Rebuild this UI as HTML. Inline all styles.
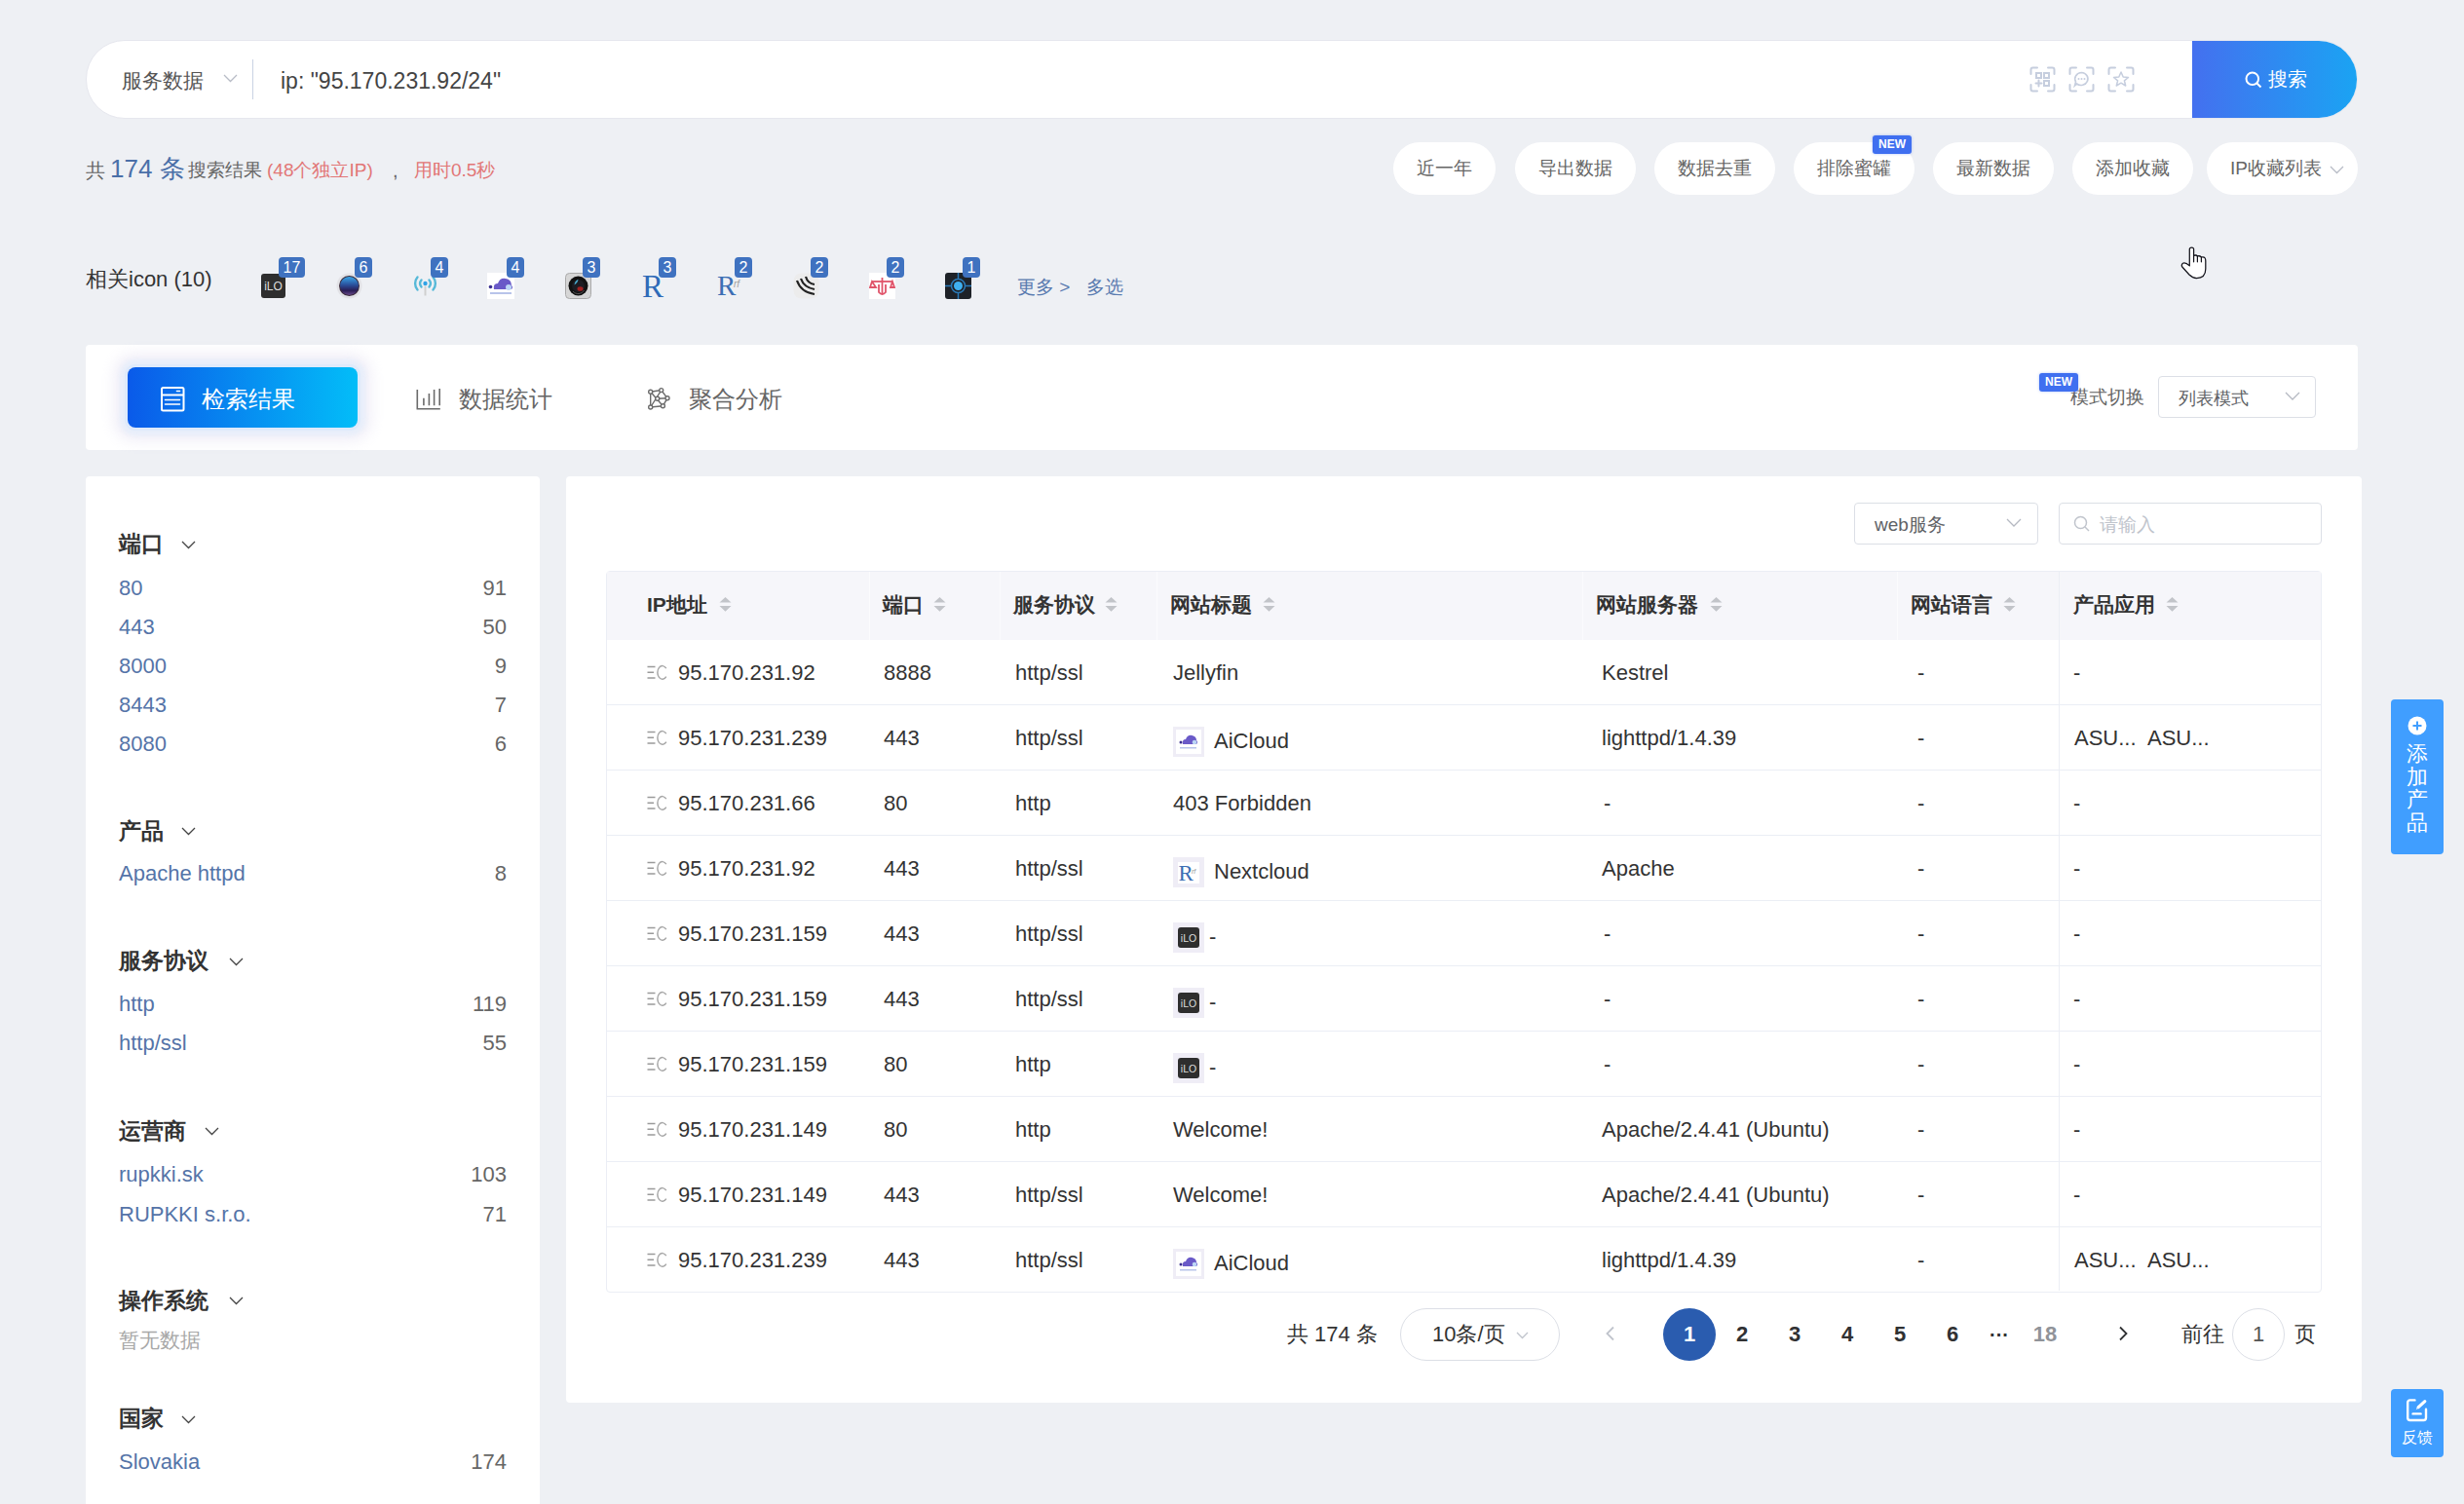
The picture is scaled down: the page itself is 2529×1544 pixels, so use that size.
<!DOCTYPE html>
<html><head><meta charset="utf-8">
<style>
@font-face{font-family:"LS CJK";src:local("Liberation Sans");unicode-range:U+2E80-9FFF,U+F900-FAFF,U+FE30-FE4F,U+FF00-FFEF;size-adjust:133%}
*{box-sizing:border-box;margin:0;padding:0}
.tofu .zh{-webkit-text-stroke:.045em currentColor;position:relative;top:.09em}

html,body{width:2529px;height:1544px;overflow:hidden}
body{background:#eef0f4;font-family:"LS CJK","Liberation Sans",sans-serif;color:#333;position:relative}
.a{position:absolute;white-space:nowrap}
.panel{position:absolute;background:#fff;border-radius:4px}
.pill{position:absolute;top:146px;height:54px;border-radius:27px;background:#fff;color:#666;font-size:19px;line-height:54px;text-align:center}
.newb{position:absolute;background:#3f6ff0;color:#fff;font-weight:bold;font-size:12px;line-height:19px;height:19px;width:40px;text-align:center;border-radius:3px;box-shadow:0 0 3px rgba(63,111,240,.4)}
.ico{position:absolute;top:281px;width:25px;height:25px}
.bdg{position:absolute;top:264px;height:21px;min-width:18px;padding:0 3px;border-radius:4px;background:#3f72c0;color:#fff;font-size:16px;line-height:21px;text-align:center}
.sh{position:absolute;left:122px;font-size:23px;font-weight:bold;color:#333;line-height:30px}
.sh svg{position:absolute;top:9px}
.si{position:absolute;left:122px;width:398px;font-size:22px;line-height:30px;color:#5574a8}
.si b{position:absolute;right:0;top:0;font-weight:normal;color:#666}
.th{position:absolute;top:586px;height:70px;line-height:70px;font-size:21px;font-weight:bold;color:#333}
.sort{display:inline-block;vertical-align:middle;margin-left:8px;margin-top:-4px}
.row{position:absolute;left:622px;width:1760px;height:67px;border-bottom:1px solid #ebeef5}
.c{position:absolute;top:1px;line-height:66px;font-size:22px;color:#333;white-space:nowrap}
.ec{position:absolute;left:42px;top:24px;font-size:18px;line-height:18px;color:#aaa;letter-spacing:-1px}
.tic{display:inline-block;width:32px;height:31px;background:#f0eff7;vertical-align:middle;margin-right:10px;position:relative;top:2px}
.pg{position:absolute;top:1343px;width:54px;height:54px;line-height:54px;text-align:center;font-size:22px;font-weight:bold;color:#303133}
</style></head>
<body>

<!-- search bar -->
<div class="panel" style="left:88px;top:41px;width:2332px;height:81px;border-radius:40px;border:1px solid #e6e7ee;overflow:hidden">
  <div class="a" style="left:36px;top:1px;line-height:79px;font-size:21px;color:#555">服务数据</div>
  <svg class="a" style="left:140px;top:34px" width="15" height="9" viewBox="0 0 15 9"><path d="M1 1 L7.5 7.5 L14 1" fill="none" stroke="#b8bcc6" stroke-width="1.3"/></svg>
  <div class="a" style="left:170px;top:19px;width:1px;height:41px;background:#c9d2e3"></div>
  <div class="a" style="left:199px;top:1px;line-height:80px;font-size:23px;color:#444">ip: "95.170.231.92/24"</div>
  <div class="a" style="left:2161px;top:-1px;width:171px;height:81px;background:linear-gradient(90deg,#4470ef,#1aa4f3);border-radius:0 40px 40px 0"></div>
</div>
<svg class="a" style="left:2304px;top:73px" width="18" height="18" viewBox="0 0 18 18"><circle cx="7.8" cy="7.8" r="6.3" fill="none" stroke="#fff" stroke-width="2"/><path d="M12.5 12.5 L16.5 16.5" stroke="#fff" stroke-width="2"/></svg>
<div class="a" style="left:2328px;top:66px;font-size:20px;line-height:30px;color:#fff">搜索</div>

<!-- summary -->
<div class="a" style="left:88px;top:160px;line-height:30px;font-size:20px;color:#666">共</div>
<div class="a" style="left:113px;top:156px;line-height:34px;font-size:26px;color:#4a6fa8">174 条</div>
<div class="a" style="left:193px;top:160px;line-height:30px;font-size:19px;color:#666">搜索结果</div>
<div class="a" style="left:274px;top:160px;line-height:30px;font-size:19px;color:#e27777">(48个独立IP)</div>
<div class="a" style="left:403px;top:160px;line-height:30px;font-size:20px;color:#666">,</div>
<div class="a" style="left:425px;top:160px;line-height:30px;font-size:19px;color:#e27777">用时0.5秒</div>

<!-- pills -->
<div class="pill" style="left:1430px;width:105px">近一年</div>
<div class="pill" style="left:1555px;width:124px">导出数据</div>
<div class="pill" style="left:1698px;width:124px">数据去重</div>
<div class="pill" style="left:1841px;width:124px">排除蜜罐</div>
<div class="newb" style="left:1922px;top:139px">NEW</div>
<div class="pill" style="left:1984px;width:124px">最新数据</div>
<div class="pill" style="left:2127px;width:124px">添加收藏</div>
<div class="pill" style="left:2265px;width:155px;text-align:left;padding-left:24px">IP收藏列表</div>
<svg class="a" style="left:2391px;top:170px" width="15" height="9" viewBox="0 0 15 9"><path d="M1 1 L7.5 7.5 L14 1" fill="none" stroke="#b8bcc6" stroke-width="1.3"/></svg>

<!-- icons row -->
<div class="a" style="left:88px;top:272px;line-height:30px;font-size:22px;color:#333">相关icon (10)</div>
<div class="a" style="left:268px;top:281px"><svg width="25" height="25" viewBox="0 0 25 25"><rect width="25" height="25" rx="3" fill="#2e2e2e"/><text x="12.5" y="17" font-size="12" fill="#ddd" text-anchor="middle" font-family="Liberation Sans">iLO</text></svg></div>
<div class="a" style="left:345px;top:280px"><svg width="27" height="27" viewBox="0 0 27 27"><defs><linearGradient id="lg2" x1="0" y1="0" x2="0" y2="1"><stop offset="0" stop-color="#3aa6e8"/><stop offset=".45" stop-color="#2a4f9a"/><stop offset=".75" stop-color="#2a1d55"/><stop offset="1" stop-color="#6a4a8a"/></linearGradient></defs><circle cx="13.5" cy="13.5" r="13" fill="#e2e2e6"/><circle cx="13.5" cy="13.5" r="10.5" fill="#3a2a3a"/><circle cx="13.5" cy="13.5" r="9.5" fill="url(#lg2)"/></svg></div>
<div class="a" style="left:424px;top:282px"><svg width="25" height="23" viewBox="0 0 25 23"><g fill="none" stroke="#56b9d8" stroke-width="2.4" stroke-linecap="round"><path d="M4.5 2.5 A10 10 0 0 0 4.5 15.5"/><path d="M20.5 2.5 A10 10 0 0 1 20.5 15.5"/><path d="M8.5 5.5 A5.5 5.5 0 0 0 8.5 12.5"/><path d="M16.5 5.5 A5.5 5.5 0 0 1 16.5 12.5"/></g><circle cx="12.5" cy="9" r="2.2" fill="#2fa3e6"/><rect x="11.5" y="11.5" width="2" height="10" fill="#cfcfcf"/></svg></div>
<div class="a" style="left:500px;top:280px"><svg width="28" height="27" viewBox="0 0 28 27"><rect width="28" height="27" fill="#fff"/><circle cx="3.5" cy="14.5" r="1.8" fill="#3b2f90"/><path d="M7 17 Q6 11 11 11 Q13 5 19 6 Q25 7 25 13 Q27 15 25 17 Z" fill="#6a5ac8"/><circle cx="22" cy="15" r="3" fill="#bcd6f5"/><rect x="3" y="20" width="22" height="2" fill="#b8c4ea"/></svg></div>
<div class="a" style="left:580px;top:280px"><svg width="27" height="27" viewBox="0 0 27 27"><rect x="0.5" y="0.5" width="26" height="26" rx="4" fill="#d6d6d6" stroke="#aaa"/><circle cx="13.5" cy="13.5" r="10" fill="#111"/><circle cx="13.5" cy="13.5" r="6.5" fill="#1c1c22"/><path d="M9.5 12.5 Q10 8.5 13.5 6.8 Q13 10.5 9.5 12.5 Z" fill="#4aaed0"/><ellipse cx="15.5" cy="16.5" rx="3" ry="2.3" fill="#a02020"/><path d="M8 19 A7 7 0 0 0 19.5 18" stroke="#666" stroke-width="0.8" fill="none"/></svg></div>
<div class="a" style="left:658px;top:280px"><svg width="27" height="27" viewBox="0 0 27 27"><text x="1" y="25" font-size="33" fill="#2f6bb8" font-family="Liberation Serif">R</text></svg></div>
<div class="a" style="left:736px;top:280px"><svg width="27" height="27" viewBox="0 0 27 27"><text x="0" y="23" font-size="29" fill="#3c6fb4" font-family="Liberation Serif">R</text><text x="17" y="15" font-size="10" fill="#a0a0a0" font-family="Liberation Sans" font-style="italic">rf</text></svg></div>
<div class="a" style="left:814px;top:280px"><svg width="27" height="27" viewBox="0 0 27 27"><rect x="0.5" y="0.5" width="26" height="26" rx="8" fill="#ececec"/><g fill="none" stroke="#222" stroke-width="2.2"><path d="M4 8 Q8 20 22 22"/><path d="M8 6 Q11 15 22 17"/><path d="M13 4 Q15 11 22 12"/></g></svg></div>
<div class="a" style="left:892px;top:280px"><svg width="27" height="27" viewBox="0 0 27 27"><rect width="27" height="27" fill="#fff"/><g fill="none" stroke="#e0546a" stroke-width="1.8"><path d="M3 9 H24"/><path d="M13.5 5 V22"/><path d="M3 9 L1 15 H7 Z"/><path d="M24 9 L22 15 H26 Z"/><path d="M10 12 V20 Q13.5 24 17 20 V12"/></g></svg></div>
<div class="a" style="left:970px;top:280px"><svg width="27" height="27" viewBox="0 0 27 27"><rect width="27" height="27" rx="3" fill="#1e2228"/><g stroke="#2a7ab8" stroke-width="1.5" fill="none"><circle cx="13.5" cy="13.5" r="7"/><path d="M0 13.5 H6 M21 13.5 H27 M13.5 0 V6 M13.5 21 V27"/></g><circle cx="13.5" cy="13.5" r="4.5" fill="#3fb0f0"/></svg></div>
<div class="bdg" style="left:286px;width:27px">17</div>
<div class="bdg" style="left:364px;width:18px">6</div>
<div class="bdg" style="left:442px;width:18px">4</div>
<div class="bdg" style="left:520px;width:18px">4</div>
<div class="bdg" style="left:598px;width:18px">3</div>
<div class="bdg" style="left:676px;width:18px">3</div>
<div class="bdg" style="left:754px;width:18px">2</div>
<div class="bdg" style="left:832px;width:18px">2</div>
<div class="bdg" style="left:910px;width:18px">2</div>
<div class="bdg" style="left:988px;width:18px">1</div>
<div class="a" style="left:1044px;top:280px;line-height:30px;font-size:19px;color:#5a7bb0">更多 &gt;</div>
<div class="a" style="left:1115px;top:280px;line-height:30px;font-size:19px;color:#5a7bb0">多选</div>

<!-- tabs panel -->
<div class="panel" style="left:88px;top:354px;width:2332px;height:108px"></div>
<div class="a" style="left:131px;top:377px;width:236px;height:62px;border-radius:8px;background:linear-gradient(90deg,#0a5ae9,#03bdf8);box-shadow:0 0 0 3px rgba(215,232,252,.55),0 0 4px 8px rgba(225,236,252,.6),0 0 14px 14px rgba(236,234,246,.75)"></div>
<svg class="a" style="left:164px;top:396px" width="26" height="27" viewBox="0 0 26 27"><rect x="2" y="2" width="22.5" height="23.5" rx="1.5" fill="none" stroke="#fff" stroke-width="2"/><path d="M2 9.5 H24.5" stroke="#fff" stroke-width="2"/><path d="M17.5 5.5 H20.5" stroke="#fff" stroke-width="1.6" stroke-linecap="round"/><path d="M5.5 14.5 H20.5 M5.5 19 H20.5" stroke="#fff" stroke-width="1.6" stroke-linecap="round"/></svg>
<div class="a" style="left:207px;top:394px;font-size:24px;line-height:32px;color:#fff">检索结果</div>
<svg class="a" style="left:426px;top:397px" width="28" height="25" viewBox="0 0 28 25"><path d="M2.3 3 V22.7 H25.8" fill="none" stroke="#6b6b6b" stroke-width="1.6"/><path d="M8.9 11.7 V19.2 M14.4 7 V19.2 M19.6 3 V19.2 M25.2 1.9 V19.2" stroke="#6b6b6b" stroke-width="1.6"/></svg>
<div class="a" style="left:471px;top:394px;font-size:24px;line-height:32px;color:#666">数据统计</div>
<svg class="a" style="left:663px;top:397px" width="26" height="25" viewBox="0 0 26 25"><g fill="none" stroke="#6b6b6b" stroke-width="1.4"><path d="M4.7 5.3 L15.7 3.6 L22 11.7 L17.4 19.8 L4.7 21 Z"/><path d="M4.7 5.3 L17.4 19.8 M15.7 3.6 L4.7 21 M11.7 12.3 L22 11.7"/></g><g fill="#fff" stroke="#6b6b6b" stroke-width="1.4"><circle cx="4.7" cy="5.3" r="2"/><circle cx="15.7" cy="3.6" r="2"/><circle cx="22" cy="11.7" r="2"/><circle cx="17.4" cy="19.8" r="2"/><circle cx="4.7" cy="21" r="2"/><circle cx="11.7" cy="12.3" r="2"/></g></svg>
<div class="a" style="left:707px;top:394px;font-size:24px;line-height:32px;color:#666">聚合分析</div>
<div class="a" style="left:2125px;top:393px;font-size:19px;line-height:30px;color:#666">模式切换</div>
<div class="newb" style="left:2093px;top:383px">NEW</div>
<div class="a" style="left:2215px;top:386px;width:162px;height:43px;border:1px solid #dcdfe6;border-radius:4px;background:#fff"></div>
<div class="a" style="left:2236px;top:394px;font-size:18px;line-height:30px;color:#606266">列表模式</div>
<svg class="a" style="left:2345px;top:402px" width="16" height="9" viewBox="0 0 16 9"><path d="M1 1 L8 8 L15 1" fill="none" stroke="#b5b9c2" stroke-width="1.3"/></svg>

<!-- sidebar -->
<div class="panel" style="left:88px;top:489px;width:466px;height:1100px"></div>
<div class="sh" style="top:543px">端口</div>
<svg class="a" style="left:186px;top:555px" width="15" height="9" viewBox="0 0 15 9"><path d="M1 1 L7.5 7.5 L14 1" fill="none" stroke="#444" stroke-width="1.3"/></svg>
<div class="si" style="top:589px">80<b>91</b></div>
<div class="si" style="top:629px">443<b>50</b></div>
<div class="si" style="top:669px">8000<b>9</b></div>
<div class="si" style="top:709px">8443<b>7</b></div>
<div class="si" style="top:749px">8080<b>6</b></div>
<div class="sh" style="top:838px">产品</div>
<svg class="a" style="left:186px;top:849px" width="15" height="9" viewBox="0 0 15 9"><path d="M1 1 L7.5 7.5 L14 1" fill="none" stroke="#444" stroke-width="1.3"/></svg>
<div class="si" style="top:882px">Apache httpd<b>8</b></div>
<div class="sh" style="top:971px">服务协议</div>
<svg class="a" style="left:235px;top:983px" width="15" height="9" viewBox="0 0 15 9"><path d="M1 1 L7.5 7.5 L14 1" fill="none" stroke="#444" stroke-width="1.3"/></svg>
<div class="si" style="top:1016px">http<b>119</b></div>
<div class="si" style="top:1056px">http/ssl<b>55</b></div>
<div class="sh" style="top:1146px">运营商</div>
<svg class="a" style="left:210px;top:1157px" width="15" height="9" viewBox="0 0 15 9"><path d="M1 1 L7.5 7.5 L14 1" fill="none" stroke="#444" stroke-width="1.3"/></svg>
<div class="si" style="top:1191px">rupkki.sk<b>103</b></div>
<div class="si" style="top:1232px">RUPKKI s.r.o.<b>71</b></div>
<div class="sh" style="top:1320px">操作系统</div>
<svg class="a" style="left:235px;top:1331px" width="15" height="9" viewBox="0 0 15 9"><path d="M1 1 L7.5 7.5 L14 1" fill="none" stroke="#444" stroke-width="1.3"/></svg>
<div class="a" style="left:122px;top:1361px;font-size:21px;line-height:30px;color:#a8a8a8">暂无数据</div>
<div class="sh" style="top:1441px">国家</div>
<svg class="a" style="left:186px;top:1453px" width="15" height="9" viewBox="0 0 15 9"><path d="M1 1 L7.5 7.5 L14 1" fill="none" stroke="#444" stroke-width="1.3"/></svg>
<div class="si" style="top:1486px">Slovakia<b>174</b></div>

<!-- results panel -->
<div class="panel" style="left:581px;top:489px;width:1843px;height:951px"></div>
<div class="a" style="left:1903px;top:516px;width:189px;height:43px;border:1px solid #dcdfe6;border-radius:4px"></div>
<div class="a" style="left:1924px;top:524px;font-size:19px;line-height:30px;color:#606266">web服务</div>
<svg class="a" style="left:2059px;top:532px" width="16" height="9" viewBox="0 0 16 9"><path d="M1 1 L8 8 L15 1" fill="none" stroke="#b5b9c2" stroke-width="1.3"/></svg>
<div class="a" style="left:2113px;top:516px;width:270px;height:43px;border:1px solid #dcdfe6;border-radius:4px"></div>
<svg class="a" style="left:2128px;top:529px" width="18" height="18" viewBox="0 0 18 18"><circle cx="7.5" cy="7.5" r="6" fill="none" stroke="#c0c4cc" stroke-width="1.5"/><path d="M12 12 L16 16" stroke="#c0c4cc" stroke-width="1.5"/></svg>
<div class="a" style="left:2155px;top:524px;font-size:19px;line-height:30px;color:#c0c4cc">请输入</div>
<div class="a" style="left:622px;top:586px;width:1761px;height:741px;border:1px solid #ebeef5;border-radius:4px"></div>
<div class="a" style="left:623px;top:587px;width:1759px;height:70px;background:#f6f6fa"></div>
<div class="a" style="left:892px;top:587px;width:1px;height:70px;background:#fbfbfd"></div>
<div class="a" style="left:1026px;top:587px;width:1px;height:70px;background:#fbfbfd"></div>
<div class="a" style="left:1187px;top:587px;width:1px;height:70px;background:#fbfbfd"></div>
<div class="a" style="left:1624px;top:587px;width:1px;height:70px;background:#fbfbfd"></div>
<div class="a" style="left:1947px;top:587px;width:1px;height:70px;background:#fbfbfd"></div>
<div class="a" style="left:2113px;top:587px;width:1px;height:738px;background:#ebeef5"></div>
<div class="th" style="left:664px">IP地址</div>
<svg class="a" style="left:738px;top:612px" width="13" height="17" viewBox="0 0 13 17"><path d="M6.5 1 L12.5 6.6 H0.5 Z M6.5 15.7 L12.5 10 H0.5 Z" fill="#c2c4c9"/></svg>
<div class="th" style="left:906px">端口</div>
<svg class="a" style="left:958px;top:612px" width="13" height="17" viewBox="0 0 13 17"><path d="M6.5 1 L12.5 6.6 H0.5 Z M6.5 15.7 L12.5 10 H0.5 Z" fill="#c2c4c9"/></svg>
<div class="th" style="left:1040px">服务协议</div>
<svg class="a" style="left:1134px;top:612px" width="13" height="17" viewBox="0 0 13 17"><path d="M6.5 1 L12.5 6.6 H0.5 Z M6.5 15.7 L12.5 10 H0.5 Z" fill="#c2c4c9"/></svg>
<div class="th" style="left:1201px">网站标题</div>
<svg class="a" style="left:1296px;top:612px" width="13" height="17" viewBox="0 0 13 17"><path d="M6.5 1 L12.5 6.6 H0.5 Z M6.5 15.7 L12.5 10 H0.5 Z" fill="#c2c4c9"/></svg>
<div class="th" style="left:1638px">网站服务器</div>
<svg class="a" style="left:1755px;top:612px" width="13" height="17" viewBox="0 0 13 17"><path d="M6.5 1 L12.5 6.6 H0.5 Z M6.5 15.7 L12.5 10 H0.5 Z" fill="#c2c4c9"/></svg>
<div class="th" style="left:1961px">网站语言</div>
<svg class="a" style="left:2056px;top:612px" width="13" height="17" viewBox="0 0 13 17"><path d="M6.5 1 L12.5 6.6 H0.5 Z M6.5 15.7 L12.5 10 H0.5 Z" fill="#c2c4c9"/></svg>
<div class="th" style="left:2128px">产品应用</div>
<svg class="a" style="left:2223px;top:612px" width="13" height="17" viewBox="0 0 13 17"><path d="M6.5 1 L12.5 6.6 H0.5 Z M6.5 15.7 L12.5 10 H0.5 Z" fill="#c2c4c9"/></svg>
<div class="row" style="top:657px;border-bottom:1px solid #ebeef5;"><svg class="a" style="left:42px;top:25px" width="22" height="17" viewBox="0 0 22 17"><path d="M0.5 2.5 H8.5 M0.5 8.3 H7 M0.5 14 H8.5" stroke="#9a9a9a" stroke-width="1.6"/><path d="M19.8 4.2 A5 6.8 0 1 0 19.8 12.6" fill="none" stroke="#a8a8a8" stroke-width="1.5"/></svg><div class="c" style="left:74px">95.170.231.92</div><div class="c" style="left:285px">8888</div><div class="c" style="left:420px">http/ssl</div><div class="c" style="left:582px">Jellyfin</div><div class="c" style="left:1022px">Kestrel</div><div class="c" style="left:1346px">-</div><div class="c" style="left:1506px">-</div></div>
<div class="row" style="top:724px;border-bottom:1px solid #ebeef5;"><svg class="a" style="left:42px;top:25px" width="22" height="17" viewBox="0 0 22 17"><path d="M0.5 2.5 H8.5 M0.5 8.3 H7 M0.5 14 H8.5" stroke="#9a9a9a" stroke-width="1.6"/><path d="M19.8 4.2 A5 6.8 0 1 0 19.8 12.6" fill="none" stroke="#a8a8a8" stroke-width="1.5"/></svg><div class="c" style="left:74px">95.170.231.239</div><div class="c" style="left:285px">443</div><div class="c" style="left:420px">http/ssl</div><div class="a" style="left:582px;top:22px"><svg width="32" height="31" viewBox="0 0 32 31"><rect width="32" height="31" fill="#efedf6"/><rect x="3" y="3" width="26" height="25" fill="#fff"/><circle cx="8" cy="16" r="1.5" fill="#3b2f90"/><path d="M10 18 Q9 13 13 13 Q15 8 19.5 9 Q24 10 24 14 Q26 16 24 18 Z" fill="#6a5ac8"/><circle cx="22" cy="16" r="2.3" fill="#bcd6f5"/><rect x="7" y="21" width="17" height="1.5" fill="#b8c4ea"/></svg></div><div class="c" style="left:624px;top:4px">AiCloud</div><div class="c" style="left:1022px">lighttpd/1.4.39</div><div class="c" style="left:1346px">-</div><div class="c" style="left:1507px">ASU...</div><div class="c" style="left:1582px">ASU...</div></div>
<div class="row" style="top:791px;border-bottom:1px solid #ebeef5;"><svg class="a" style="left:42px;top:25px" width="22" height="17" viewBox="0 0 22 17"><path d="M0.5 2.5 H8.5 M0.5 8.3 H7 M0.5 14 H8.5" stroke="#9a9a9a" stroke-width="1.6"/><path d="M19.8 4.2 A5 6.8 0 1 0 19.8 12.6" fill="none" stroke="#a8a8a8" stroke-width="1.5"/></svg><div class="c" style="left:74px">95.170.231.66</div><div class="c" style="left:285px">80</div><div class="c" style="left:420px">http</div><div class="c" style="left:582px">403 Forbidden</div><div class="c" style="left:1024px">-</div><div class="c" style="left:1346px">-</div><div class="c" style="left:1506px">-</div></div>
<div class="row" style="top:858px;border-bottom:1px solid #ebeef5;"><svg class="a" style="left:42px;top:25px" width="22" height="17" viewBox="0 0 22 17"><path d="M0.5 2.5 H8.5 M0.5 8.3 H7 M0.5 14 H8.5" stroke="#9a9a9a" stroke-width="1.6"/><path d="M19.8 4.2 A5 6.8 0 1 0 19.8 12.6" fill="none" stroke="#a8a8a8" stroke-width="1.5"/></svg><div class="c" style="left:74px">95.170.231.92</div><div class="c" style="left:285px">443</div><div class="c" style="left:420px">http/ssl</div><div class="a" style="left:582px;top:22px"><svg width="32" height="31" viewBox="0 0 32 31"><rect width="32" height="31" fill="#efedf6"/><rect x="5" y="5" width="22" height="22" fill="#fff"/><text x="5.5" y="23.6" font-size="23" fill="#3c6fb4" font-family="Liberation Serif">R</text><text x="19" y="17" font-size="7" fill="#999" font-family="Liberation Sans" font-style="italic">rf</text></svg></div><div class="c" style="left:624px;top:4px">Nextcloud</div><div class="c" style="left:1022px">Apache</div><div class="c" style="left:1346px">-</div><div class="c" style="left:1506px">-</div></div>
<div class="row" style="top:925px;border-bottom:1px solid #ebeef5;"><svg class="a" style="left:42px;top:25px" width="22" height="17" viewBox="0 0 22 17"><path d="M0.5 2.5 H8.5 M0.5 8.3 H7 M0.5 14 H8.5" stroke="#9a9a9a" stroke-width="1.6"/><path d="M19.8 4.2 A5 6.8 0 1 0 19.8 12.6" fill="none" stroke="#a8a8a8" stroke-width="1.5"/></svg><div class="c" style="left:74px">95.170.231.159</div><div class="c" style="left:285px">443</div><div class="c" style="left:420px">http/ssl</div><div class="a" style="left:582px;top:22px"><svg width="32" height="31" viewBox="0 0 32 31"><rect width="32" height="31" fill="#efedf6"/><rect x="5" y="5" width="22" height="21" rx="3" fill="#2e2e2e"/><text x="16" y="19.5" font-size="10.5" fill="#ddd" text-anchor="middle" font-family="Liberation Sans">iLO</text></svg></div><div class="c" style="left:619px;top:4px">-</div><div class="c" style="left:1024px">-</div><div class="c" style="left:1346px">-</div><div class="c" style="left:1506px">-</div></div>
<div class="row" style="top:992px;border-bottom:1px solid #ebeef5;"><svg class="a" style="left:42px;top:25px" width="22" height="17" viewBox="0 0 22 17"><path d="M0.5 2.5 H8.5 M0.5 8.3 H7 M0.5 14 H8.5" stroke="#9a9a9a" stroke-width="1.6"/><path d="M19.8 4.2 A5 6.8 0 1 0 19.8 12.6" fill="none" stroke="#a8a8a8" stroke-width="1.5"/></svg><div class="c" style="left:74px">95.170.231.159</div><div class="c" style="left:285px">443</div><div class="c" style="left:420px">http/ssl</div><div class="a" style="left:582px;top:22px"><svg width="32" height="31" viewBox="0 0 32 31"><rect width="32" height="31" fill="#efedf6"/><rect x="5" y="5" width="22" height="21" rx="3" fill="#2e2e2e"/><text x="16" y="19.5" font-size="10.5" fill="#ddd" text-anchor="middle" font-family="Liberation Sans">iLO</text></svg></div><div class="c" style="left:619px;top:4px">-</div><div class="c" style="left:1024px">-</div><div class="c" style="left:1346px">-</div><div class="c" style="left:1506px">-</div></div>
<div class="row" style="top:1059px;border-bottom:1px solid #ebeef5;"><svg class="a" style="left:42px;top:25px" width="22" height="17" viewBox="0 0 22 17"><path d="M0.5 2.5 H8.5 M0.5 8.3 H7 M0.5 14 H8.5" stroke="#9a9a9a" stroke-width="1.6"/><path d="M19.8 4.2 A5 6.8 0 1 0 19.8 12.6" fill="none" stroke="#a8a8a8" stroke-width="1.5"/></svg><div class="c" style="left:74px">95.170.231.159</div><div class="c" style="left:285px">80</div><div class="c" style="left:420px">http</div><div class="a" style="left:582px;top:22px"><svg width="32" height="31" viewBox="0 0 32 31"><rect width="32" height="31" fill="#efedf6"/><rect x="5" y="5" width="22" height="21" rx="3" fill="#2e2e2e"/><text x="16" y="19.5" font-size="10.5" fill="#ddd" text-anchor="middle" font-family="Liberation Sans">iLO</text></svg></div><div class="c" style="left:619px;top:4px">-</div><div class="c" style="left:1024px">-</div><div class="c" style="left:1346px">-</div><div class="c" style="left:1506px">-</div></div>
<div class="row" style="top:1126px;border-bottom:1px solid #ebeef5;"><svg class="a" style="left:42px;top:25px" width="22" height="17" viewBox="0 0 22 17"><path d="M0.5 2.5 H8.5 M0.5 8.3 H7 M0.5 14 H8.5" stroke="#9a9a9a" stroke-width="1.6"/><path d="M19.8 4.2 A5 6.8 0 1 0 19.8 12.6" fill="none" stroke="#a8a8a8" stroke-width="1.5"/></svg><div class="c" style="left:74px">95.170.231.149</div><div class="c" style="left:285px">80</div><div class="c" style="left:420px">http</div><div class="c" style="left:582px">Welcome!</div><div class="c" style="left:1022px">Apache/2.4.41 (Ubuntu)</div><div class="c" style="left:1346px">-</div><div class="c" style="left:1506px">-</div></div>
<div class="row" style="top:1193px;border-bottom:1px solid #ebeef5;"><svg class="a" style="left:42px;top:25px" width="22" height="17" viewBox="0 0 22 17"><path d="M0.5 2.5 H8.5 M0.5 8.3 H7 M0.5 14 H8.5" stroke="#9a9a9a" stroke-width="1.6"/><path d="M19.8 4.2 A5 6.8 0 1 0 19.8 12.6" fill="none" stroke="#a8a8a8" stroke-width="1.5"/></svg><div class="c" style="left:74px">95.170.231.149</div><div class="c" style="left:285px">443</div><div class="c" style="left:420px">http/ssl</div><div class="c" style="left:582px">Welcome!</div><div class="c" style="left:1022px">Apache/2.4.41 (Ubuntu)</div><div class="c" style="left:1346px">-</div><div class="c" style="left:1506px">-</div></div>
<div class="row" style="top:1260px;border-bottom:none;"><svg class="a" style="left:42px;top:25px" width="22" height="17" viewBox="0 0 22 17"><path d="M0.5 2.5 H8.5 M0.5 8.3 H7 M0.5 14 H8.5" stroke="#9a9a9a" stroke-width="1.6"/><path d="M19.8 4.2 A5 6.8 0 1 0 19.8 12.6" fill="none" stroke="#a8a8a8" stroke-width="1.5"/></svg><div class="c" style="left:74px">95.170.231.239</div><div class="c" style="left:285px">443</div><div class="c" style="left:420px">http/ssl</div><div class="a" style="left:582px;top:22px"><svg width="32" height="31" viewBox="0 0 32 31"><rect width="32" height="31" fill="#efedf6"/><rect x="3" y="3" width="26" height="25" fill="#fff"/><circle cx="8" cy="16" r="1.5" fill="#3b2f90"/><path d="M10 18 Q9 13 13 13 Q15 8 19.5 9 Q24 10 24 14 Q26 16 24 18 Z" fill="#6a5ac8"/><circle cx="22" cy="16" r="2.3" fill="#bcd6f5"/><rect x="7" y="21" width="17" height="1.5" fill="#b8c4ea"/></svg></div><div class="c" style="left:624px;top:4px">AiCloud</div><div class="c" style="left:1022px">lighttpd/1.4.39</div><div class="c" style="left:1346px">-</div><div class="c" style="left:1507px">ASU...</div><div class="c" style="left:1582px">ASU...</div></div>
<div class="a" style="left:1321px;top:1355px;font-size:22px;line-height:30px;color:#333">共 174 条</div>
<div class="a" style="left:1437px;top:1343px;width:164px;height:54px;border:1px solid #dcdfe6;border-radius:27px"></div>
<div class="a" style="left:1470px;top:1355px;font-size:22px;line-height:30px;color:#333">10条/页</div>
<svg class="a" style="left:1556px;top:1367px" width="13" height="8" viewBox="0 0 13 8"><path d="M1 1 L6.5 6.5 L12 1" fill="none" stroke="#c0c4cc" stroke-width="1.3"/></svg>
<svg class="a" style="left:1647px;top:1361px" width="11" height="16" viewBox="0 0 11 16"><path d="M9 1.5 L2.5 8 L9 14.5" fill="none" stroke="#c0c4cc" stroke-width="1.8"/></svg>
<div class="a" style="left:1707px;top:1343px;width:54px;height:54px;border-radius:27px;background:#2a5caf"></div>
<div class="pg" style="left:1707px;color:#fff">1</div>
<div class="pg" style="left:1761px">2</div>
<div class="pg" style="left:1815px">3</div>
<div class="pg" style="left:1869px">4</div>
<div class="pg" style="left:1923px">5</div>
<div class="pg" style="left:1977px">6</div>
<div class="pg" style="left:2025px;font-size:20px">···</div>
<div class="pg" style="left:2072px;color:#909399">18</div>
<svg class="a" style="left:2174px;top:1361px" width="11" height="16" viewBox="0 0 11 16"><path d="M2 1.5 L8.5 8 L2 14.5" fill="none" stroke="#303133" stroke-width="1.8"/></svg>
<div class="a" style="left:2239px;top:1355px;font-size:22px;line-height:30px;color:#333">前往</div>
<div class="a" style="left:2291px;top:1343px;width:54px;height:54px;border:1px solid #dcdfe6;border-radius:27px;text-align:center;line-height:52px;font-size:22px;color:#555">1</div>
<div class="a" style="left:2355px;top:1355px;font-size:22px;line-height:30px;color:#333">页</div>

<!-- float buttons -->
<div class="a" style="left:2454px;top:718px;width:54px;height:159px;background:#409eff;border-radius:4px"></div>
<svg class="a" style="left:2471px;top:735px" width="20" height="20" viewBox="0 0 20 20"><circle cx="10" cy="10" r="9.5" fill="#fff"/><path d="M10 5.5 V14.5 M5.5 10 H14.5" stroke="#409eff" stroke-width="2"/></svg>
<div class="a" style="left:2454px;top:762px;width:54px;text-align:center;font-size:22px;line-height:23.5px;color:#fff;white-space:normal">添<br>加<br>产<br>品</div>
<div class="a" style="left:2454px;top:1426px;width:54px;height:70px;background:#409eff;border-radius:4px"></div>
<svg class="a" style="left:2468px;top:1434px" width="26" height="27" viewBox="0 0 26 27"><path d="M10.5 3.4 H5.6 Q3.2 3.4 3.2 5.8 V21.6 Q3.2 24 5.6 24 H19.6 Q22 24 22 21.6 V12.8" fill="none" stroke="#fff" stroke-width="2.4" stroke-linecap="round"/><path d="M14.2 10.6 L20.8 4.6" stroke="#fff" stroke-width="3.2" stroke-linecap="round"/><path d="M11.8 13.2 L14.8 11.2 L13.4 9.6 Z" fill="#fff"/><path d="M8.6 17.4 H16.6" stroke="#fff" stroke-width="2.4" stroke-linecap="round"/></svg>
<div class="a" style="left:2454px;top:1464px;width:54px;text-align:center;font-size:16px;line-height:24px;color:#fff">反馈</div>
<!-- search bar icons -->
<svg class="a" style="left:2083px;top:68px" width="27" height="27" viewBox="0 0 27 27"><g fill="none" stroke="#c6cede" stroke-width="2" stroke-linecap="round"><path d="M1.5 8 V3.5 Q1.5 1.5 3.5 1.5 H8 M19 1.5 H23.5 Q25.5 1.5 25.5 3.5 V8 M25.5 19 V23.5 Q25.5 25.5 23.5 25.5 H19 M8 25.5 H3.5 Q1.5 25.5 1.5 23.5 V19"/><rect x="7" y="7" width="5" height="5"/><rect x="15" y="7" width="5" height="5"/><rect x="15" y="15" width="5" height="5"/><path d="M9.5 14.5 V20.5 M6.5 17.5 H12.5"/></g></svg>
<svg class="a" style="left:2123px;top:68px" width="27" height="27" viewBox="0 0 27 27"><g fill="none" stroke="#c6cede" stroke-width="2" stroke-linecap="round"><path d="M1.5 8 V3.5 Q1.5 1.5 3.5 1.5 H8 M19 1.5 H23.5 Q25.5 1.5 25.5 3.5 V8 M25.5 19 V23.5 Q25.5 25.5 23.5 25.5 H19 M8 25.5 H3.5 Q1.5 25.5 1.5 23.5 V19"/><path d="M13.5 6.5 A7 6.5 0 1 1 8.5 18 L6.5 20 L7.5 16 A7 6.5 0 0 1 13.5 6.5 Z" stroke-width="1.6"/></g><g fill="#c6cede"><circle cx="10.5" cy="13" r="1"/><circle cx="13.5" cy="13" r="1"/><circle cx="16.5" cy="13" r="1"/></g></svg>
<svg class="a" style="left:2163px;top:68px" width="28" height="27" viewBox="0 0 28 27"><g fill="none" stroke="#c6cede" stroke-width="2" stroke-linecap="round"><path d="M1.5 8 V3.5 Q1.5 1.5 3.5 1.5 H8 M20 1.5 H24.5 Q26.5 1.5 26.5 3.5 V8 M26.5 19 V23.5 Q26.5 25.5 24.5 25.5 H20 M8 25.5 H3.5 Q1.5 25.5 1.5 23.5 V19"/><path d="M14 6 L16.2 11 L21.5 11.4 L17.4 14.8 L18.7 20 L14 17.2 L9.3 20 L10.6 14.8 L6.5 11.4 L11.8 11 Z" stroke-width="1.5" stroke-linejoin="round"/></g></svg>
<!-- cursor -->
<svg class="a" style="left:2225px;top:245px" width="50" height="50" viewBox="0 0 50 50"><path d="M22.3 27.9 L22.3 11 Q22.3 9 24.5 9 Q26.6 9 26.6 11 L26.6 17.5 Q29 16.3 30.4 18 Q32.5 17.2 34.4 19 Q37 18.3 38.2 20 Q38.8 21 38.8 23 L38.8 31 Q38.8 40.5 29.5 40.5 Q25.5 40.5 22 37 L14.8 29 Q13.5 27 15.5 25.3 Q18 24 22.3 27.9 Z" fill="#fff" stroke="#14141c" stroke-width="1.25" stroke-linejoin="round"/><path d="M26.6 17.5 V23.8 M30.4 18 V23.8 M34.4 19 V23.8" stroke="#14141c" stroke-width="1.2" stroke-linecap="round"/></svg>

<script>
(function(){
  try{
    var s=document.createElement('span');
    s.style.cssText='position:absolute;left:0;top:0;visibility:hidden;font-family:"Liberation Sans";font-size:100px;line-height:1;white-space:nowrap';
    s.textContent='\u7aef\u7aef';
    document.body.appendChild(s);
    var w=s.getBoundingClientRect().width;
    document.body.removeChild(s);
    if(Math.abs(w-150)>3) return;
    document.documentElement.className+=' tofu';
    var re=/[\u2E80-\u9FFF\uF900-\uFAFF\uFE30-\uFE4F\uFF00-\uFFEF]+/g;
    var walker=document.createTreeWalker(document.body,NodeFilter.SHOW_TEXT,null,false);
    var nodes=[];while(walker.nextNode())nodes.push(walker.currentNode);
    nodes.forEach(function(n){
      var p=n.parentNode; if(!p||p.closest('svg,script,style'))return;
      var t=n.nodeValue; re.lastIndex=0; if(!re.test(t))return; re.lastIndex=0;
      var frag=document.createDocumentFragment(),last=0,m;
      while((m=re.exec(t))){
        if(m.index>last)frag.appendChild(document.createTextNode(t.slice(last,m.index)));
        var sp=document.createElement('span');sp.className='zh';sp.textContent=m[0];frag.appendChild(sp);
        last=m.index+m[0].length;
      }
      if(last<t.length)frag.appendChild(document.createTextNode(t.slice(last)));
      p.replaceChild(frag,n);
    });
  }catch(e){}
})();
</script>
</body></html>
